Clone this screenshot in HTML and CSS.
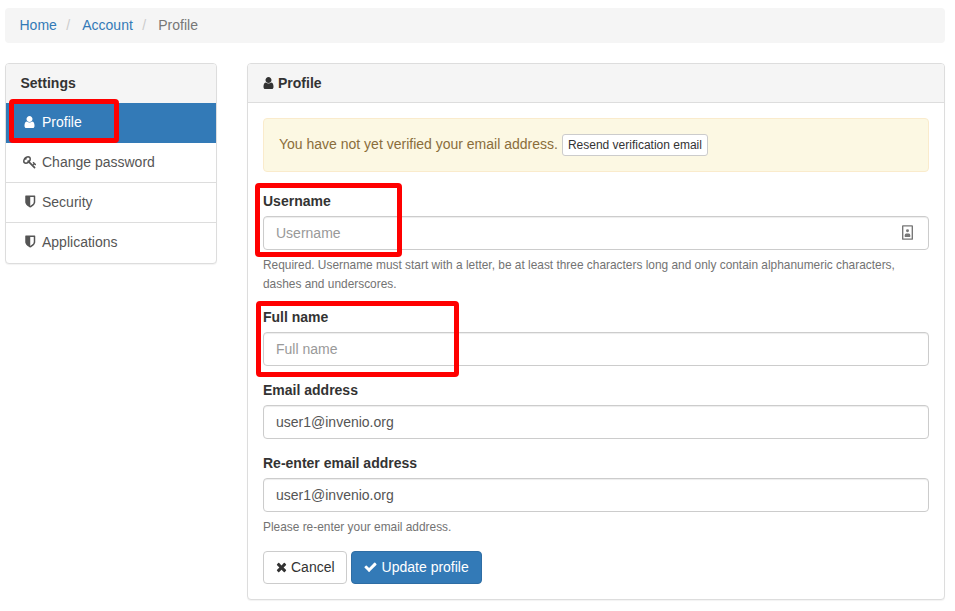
FILE: index.html
```html
<!DOCTYPE html>
<html lang="en">
<head>
	<meta charset="UTF-8">
	<title>Profile</title>
	<link rel="stylesheet" href="styles.css">
</head>
<body>
<svg class="defs" width="0" height="0">
	<symbol id="i-user" viewBox="256 0 1280 1792"><path d="M1536 1399q0 109-62.5 187t-150.5 78h-854q-88 0-150.5-78t-62.5-187q0-85 8.5-160.5t31.5-152 58.5-131 94-89 134.5-34.5q131 128 313 128t313-128q76 0 134.5 34.5t94 89 58.5 131 31.5 152 8.5 160.5zm-256-887q0 159-112.5 271.5t-271.5 112.5-271.5-112.5-112.5-271.5 112.5-271.5 271.5-112.5 271.5 112.5 112.5 271.5z"/></symbol>
	<symbol id="i-key" viewBox="0 0 1792 1792"><path d="M832 512q0-80-56-136t-136-56-136 56-56 136q0 42 19 83-41-19-83-19-80 0-136 56t-56 136 56 136 136 56 136-56 56-136q0-42-19-83 41 19 83 19 80 0 136-56t56-136zm851 704q0 17-49 66t-66 49q-9 0-28.5-16t-36.5-33-38.5-40-24.5-26l-96 96 220 220q28 28 28 68 0 42-39 81t-81 39q-40 0-68-28l-671-671q-176 131-365 131-163 0-265.5-102.5t-102.5-265.5q0-160 95-313t248-248 313-95q163 0 265.5 102.5t102.5 265.5q0 189-131 365l355 355 96-96q-3-3-26-24.5t-40-38.5-33-36.5-16-28.5q0-17 49-66t66-49q13 0 23 10 6 6 46 44.5t82 79.5 86.5 86 73 78 28.5 41z"/></symbol>
	<symbol id="i-shield" viewBox="0 0 1792 1792"><path d="M1376 896v-640h-448v1137q119-63 213-137 235-184 235-360zm192-768v768q0 86-33.5 170.5t-83 150-118 127.5-126.5 103-121 77.5-89.5 49.5-42.5 20q-12 6-26 6t-26-6q-16-7-42.5-20t-89.5-49.5-121-77.5-126.5-103-118-127.5-83-150-33.5-170.5v-768q0-26 19-45t45-19h1152q26 0 45 19t19 45z"/></symbol>
	<symbol id="i-times" viewBox="192 0 1408 1792"><path d="M1490 1322q0 40-28 68l-136 136q-28 28-68 28t-68-28l-294-294-294 294q-28 28-68 28t-68-28l-136-136q-28-28-28-68t28-68l294-294-294-294q-28-28-28-68t28-68l136-136q28-28 68-28t68 28l294 294 294-294q28-28 68-28t68 28l136 136q28 28 28 68t-28 68l-294 294 294 294q28 28 28 68z"/></symbol>
	<symbol id="i-check" viewBox="64 0 1664 1792"><path d="M1671 566q0 40-28 68l-724 724-136 136q-28 28-68 28t-68-28l-136-136-362-362q-28-28-28-68t28-68l136-136q28-28 68-28t68 28l294 295 656-657q28-28 68-28t68 28l136 136q28 28 28 68z"/></symbol>
</svg>

<ol class="breadcrumb">
	<li><a href="#">Home</a></li>
	<li class="sep">/</li>
	<li><a href="#">Account</a></li>
	<li class="sep">/</li>
	<li class="current">Profile</li>
</ol>

<div class="page">
	<div class="panel sidebar">
		<div class="panel-heading">Settings</div>
		<a class="item active" href="#"><span class="item-icon"><svg class="ic-user"><use href="#i-user"/></svg></span>Profile</a>
		<a class="item" href="#"><span class="item-icon"><svg class="ic-full"><use href="#i-key"/></svg></span>Change password</a>
		<a class="item" href="#"><span class="item-icon"><svg class="ic-full"><use href="#i-shield"/></svg></span>Security</a>
		<a class="item" href="#"><span class="item-icon"><svg class="ic-full"><use href="#i-shield"/></svg></span>Applications</a>
	</div>

	<div class="panel main">
		<div class="panel-heading"><svg class="ic-user head-icon"><use href="#i-user"/></svg>Profile</div>
		<div class="panel-body">
			<div class="alert"><span class="alert-text">You have not yet verified your email address.</span><button class="btn-xs" type="button">Resend verification email</button></div>

			<div class="form-group">
				<label for="username">Username</label>
				<div class="input-wrap">
					<input class="form-control" id="username" type="text" placeholder="Username">
					<svg class="badge-icon" viewBox="0 0 12 16"><path fill-rule="evenodd" d="M1 0h10a1 1 0 0 1 1 1v14a1 1 0 0 1-1 1H1a1 1 0 0 1-1-1V1a1 1 0 0 1 1-1zm.5 1.500v13h9v-13z"/><circle cx="6" cy="6" r="1.600"/><path d="M3 13v-2q0-1.800 1.500-1.800h3q1.500 0 1.500 1.800v2z"/></svg>
				</div>
				<p class="help">Required. Username must start with a letter, be at least three characters long and only contain alphanumeric characters, dashes and underscores.</p>
			</div>

			<div class="form-group">
				<label for="fullname">Full name</label>
				<input class="form-control" id="fullname" type="text" placeholder="Full name">
			</div>

			<div class="form-group">
				<label for="email">Email address</label>
				<input class="form-control" id="email" type="text" value="user1@invenio.org">
			</div>

			<div class="form-group">
				<label for="email2">Re-enter email address</label>
				<input class="form-control" id="email2" type="text" value="user1@invenio.org">
				<p class="help">Please re-enter your email address.</p>
			</div>

			<div class="actions">
				<button class="btn btn-cancel" type="button"><svg class="btn-icon ic-times"><use href="#i-times"/></svg>Cancel</button>
				<button class="btn btn-primary" type="button"><svg class="btn-icon ic-check"><use href="#i-check"/></svg>Update profile</button>
			</div>
		</div>
	</div>
</div>

<div class="mark mark-profile"></div>
<div class="mark mark-username"></div>
<div class="mark mark-fullname"></div>
</body>
</html>
```

FILE: styles.css
```css
*{box-sizing:border-box;}
html,body{height:611px; overflow:hidden;}
body{margin:0; padding:8px 10px 0 5px; position:relative; background:#fff; color:#333; font:14px/20px "Liberation Sans",Arial,sans-serif;}
a{color:#337ab7; text-decoration:none;}
.defs{position:absolute;}

.breadcrumb{display:flex; height:35px; margin:0 0 20px; padding:7px 15px 8px 14.5px; list-style:none; background:#f5f5f5; border-radius:4px;}
.breadcrumb .sep{margin:0 12px 0 9.5px; color:#ccc;}
.breadcrumb .current{color:#777;}

.page{display:grid; grid-template-columns:212px 698px; gap:30px; align-items:start;}
.panel{background:#fff; border:1px solid #ddd; border-radius:4px; box-shadow:0 1px 1px rgba(0,0,0,.05); overflow:hidden;}
.panel-heading{height:39px; padding:9px 15px 10px 14.5px; background:#f5f5f5; font-weight:bold;}
.main .panel-heading{padding-left:15px; border-bottom:1px solid #ddd;}

.item{display:flex; height:40px; padding:9px 15px 0; color:#555; border-bottom:1px solid #ddd;}
.item:last-child{border-bottom:0;}
.item.active{color:#fff; background:#337ab7; border-bottom:0;}
.item-icon{display:flex; justify-content:center; align-items:center; width:17px; height:20px; margin-right:4px; fill:#555;}
.item.active .item-icon{fill:#fff;}
.ic-user{width:11px; height:14px;}
.ic-full{width:14px; height:14px;}
.head-icon{margin-right:4px; vertical-align:-2px; fill:#333;}

.panel-body{padding:15px;}
.alert{display:flex; align-items:center; gap:4px; height:54px; margin-bottom:20px; padding:0 15px; color:#8a6d3b; background:#fcf8e3; border:1px solid #faebcc; border-radius:4px;}
.alert-text{margin-bottom:2px;}
.btn-xs{height:22px; margin:0; padding:1px 5px; font:12px/18px "Liberation Sans",Arial,sans-serif; color:#333; background:#fff; border:1px solid #ccc; border-radius:3px;}

.form-group{margin-bottom:15px;}
label{display:block; height:19px; margin-bottom:5px; line-height:19px; font-weight:bold;}
.form-control{display:block; width:100%; height:34px; padding:6px 12px; font:14px/20px "Liberation Sans",Arial,sans-serif; color:#555; background:#fff; border:1px solid #ccc; border-radius:4px; box-shadow:inset 0 1px 1px rgba(0,0,0,.075);}
.form-control::placeholder{color:#999; opacity:1;}
.input-wrap{position:relative;}
.badge-icon{position:absolute; right:16px; top:9px; width:11px; height:15px; fill:#777;}
.help{margin:6px 0 -1px; font-size:11.9px; line-height:19px; color:#737373;}

.actions{display:flex; gap:4px;}
.btn{display:flex; align-items:center; height:33px; padding:0 12px 1px; font:14px/20px "Liberation Sans",Arial,sans-serif; color:#333; background:#fff; border:1px solid #ccc; border-radius:4px;}
.btn-cancel{padding-right:11px;}
.btn-primary{color:#fff; background:#337ab7; border-color:#2e6da4;}
.btn-icon{height:14px; margin-right:4px; fill:#333;}
.ic-times{width:11px;}
.ic-check{width:13px; margin-right:5px;}
.btn-primary .btn-icon{fill:#fff;}

.mark{position:absolute; border:5px solid #f00; border-radius:4px;}
.mark-profile{left:9px; top:99px; width:110px; height:44px;}
.mark-username{left:255px; top:183px; width:147px; height:74px;}
.mark-fullname{left:256px; top:301px; width:203px; height:76px;}
```
